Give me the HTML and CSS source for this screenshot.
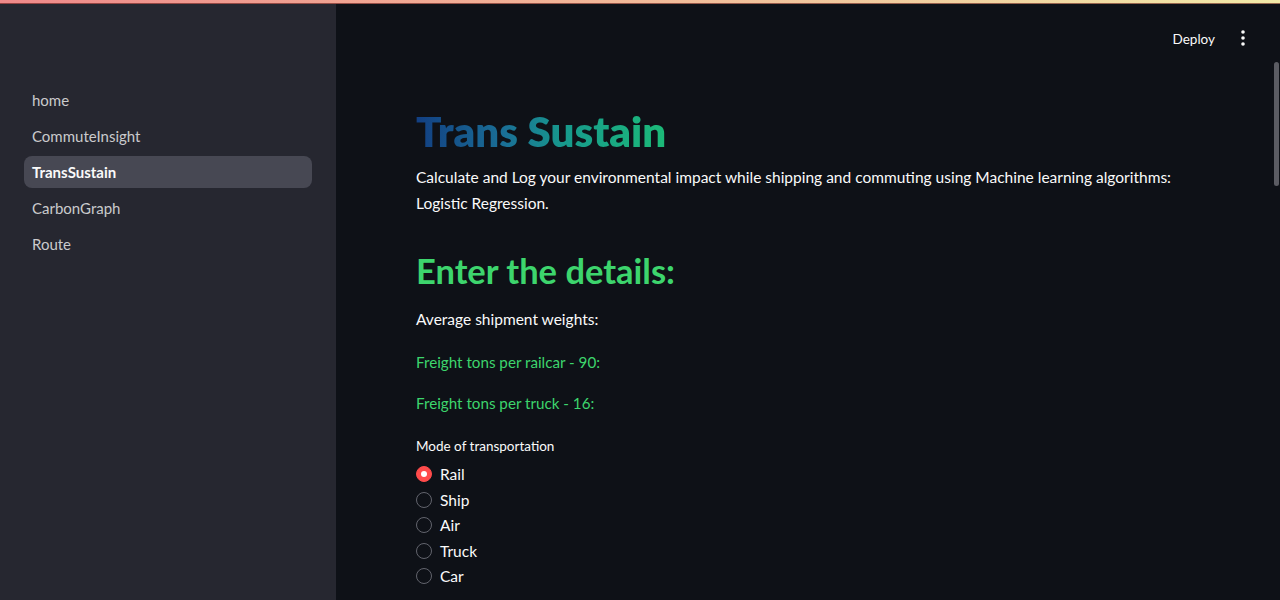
FILE: index.html
```html
<!DOCTYPE html>
<html lang="en">
<head>
<meta charset="utf-8">
<title>TransSustain</title>
<link rel="stylesheet" href="styles.css">
</head>
<body>
<div class="decoration"></div>
<div class="app">
  <aside class="sidebar">
    <nav class="nav">
      <a class="nav-item">home</a>
      <a class="nav-item">CommuteInsight</a>
      <a class="nav-item active">TransSustain</a>
      <a class="nav-item">CarbonGraph</a>
      <a class="nav-item">Route</a>
    </nav>
  </aside>
  <main class="main">
    <header class="header">
      <span class="deploy">Deploy</span>
      <span class="kebab"><svg width="16" height="16" viewBox="0 0 16 16"><circle cx="8" cy="2" r="1.8" fill="#fafafa"/><circle cx="8" cy="8" r="1.8" fill="#fafafa"/><circle cx="8" cy="14" r="1.8" fill="#fafafa"/></svg></span>
    </header>
    <section class="content">
      <h1 class="title">Trans Sustain</h1>
      <p class="lead">Calculate and Log your environmental impact while shipping and commuting using Machine learning algorithms: Logistic Regression.</p>
      <h2 class="subtitle">Enter the details:</h2>
      <p class="text t-avg">Average shipment weights:</p>
      <p class="text green t-rail">Freight tons per railcar - 90:</p>
      <p class="text green t-truck">Freight tons per truck - 16:</p>
      <div class="radio-group">
        <div class="radio-label">Mode of transportation</div>
        <div class="radio-list">
          <div class="radio checked"><span class="dot"></span><span>Rail</span></div>
          <div class="radio"><span class="dot"></span><span>Ship</span></div>
          <div class="radio"><span class="dot"></span><span>Air</span></div>
          <div class="radio"><span class="dot"></span><span>Truck</span></div>
          <div class="radio"><span class="dot"></span><span>Car</span></div>
        </div>
      </div>
    </section>
    <div class="scrollbar"></div>
  </main>
</div>
</body>
</html>
```

FILE: styles.css
```css
* { box-sizing: border-box; }
html, body { margin: 0; padding: 0; }
body {
  background: #0e1117;
  color: #fafafa;
  font-family: Lato, "Noto Sans", sans-serif;
  width: 1280px;
  height: 600px;
  overflow: hidden;
}
.decoration {
  position: absolute;
  top: 0; left: 0; right: 0;
  height: 4px;
  background: linear-gradient(90deg, #f08a8a, #f2eaa8);
  border-bottom: 1px solid rgba(90, 20, 20, 0.6);
  z-index: 5;
}
.app { display: flex; height: 600px; }
.sidebar {
  width: 336px;
  flex: none;
  background: #262730;
  padding: 84px 24px 0;
}
.nav { display: flex; flex-direction: column; gap: 4px; }
.nav-item {
  height: 32px;
  display: flex;
  align-items: center;
  padding: 0 8px;
  border-radius: 8px;
  font-size: 15px;
  color: rgba(250, 250, 250, 0.78);
}
.nav-item.active {
  background: #474853;
  color: #fafafa;
  font-weight: 700;
}
.main { flex: 1; position: relative; display: flex; flex-direction: column; }
.header {
  height: 62px;
  display: flex;
  align-items: center;
  justify-content: flex-end;
  padding: 15px 29px 0 0;
  gap: 20px;
}
.deploy { font-size: 13.5px; color: #fafafa; }
.kebab { display: flex; margin-top: -1px; }
.content {
  padding: 44px 80px 0;
  display: flex;
  flex-direction: column;
}
.title {
  margin: 0;
  font-size: 42px;
  line-height: 50px;
  font-weight: 800;
  background: linear-gradient(90deg, #123f82 0%, #1a6f96 35%, #179a8c 60%, #1cba78 100%);
  -webkit-background-clip: text;
  background-clip: text;
  color: transparent;
  width: max-content;
}
.lead {
  margin: 8px 0 0;
  font-size: 15.5px;
  line-height: 26px;
  color: #fafafa;
}
.subtitle {
  margin: 34px 0 0;
  font-size: 34.5px;
  line-height: 42px;
  font-weight: 700;
  color: #3dd56d;
}
.text { margin: 0; font-size: 15.5px; line-height: 26px; }
.t-avg { margin-top: 14px; }
.t-rail { margin-top: 17px; }
.t-truck { margin-top: 15px; }
.green { color: #3dd56d; font-size: 15.2px; }
.radio-group { margin-top: 20px; }
.radio-label { font-size: 13.5px; line-height: 20px; color: #fafafa; }
.radio-list { display: flex; flex-direction: column; gap: 1.5px; margin-top: 6px; }
.radio {
  height: 24px;
  display: flex;
  align-items: center;
  gap: 8px;
  font-size: 15.5px;
}
.dot {
  width: 16px;
  height: 16px;
  border-radius: 50%;
  border: 1px solid #62646d;
  display: flex;
  align-items: center;
  justify-content: center;
}
.radio.checked .dot { background: #ff4b4b; border-color: #ff4b4b; }
.radio.checked .dot::after {
  content: "";
  width: 6px; height: 6px; border-radius: 50%; background: #fff;
}
.scrollbar {
  position: absolute;
  right: 1px;
  top: 62px;
  width: 5px;
  height: 124px;
  border-radius: 3px;
  background: #5b5c63;
}
```
